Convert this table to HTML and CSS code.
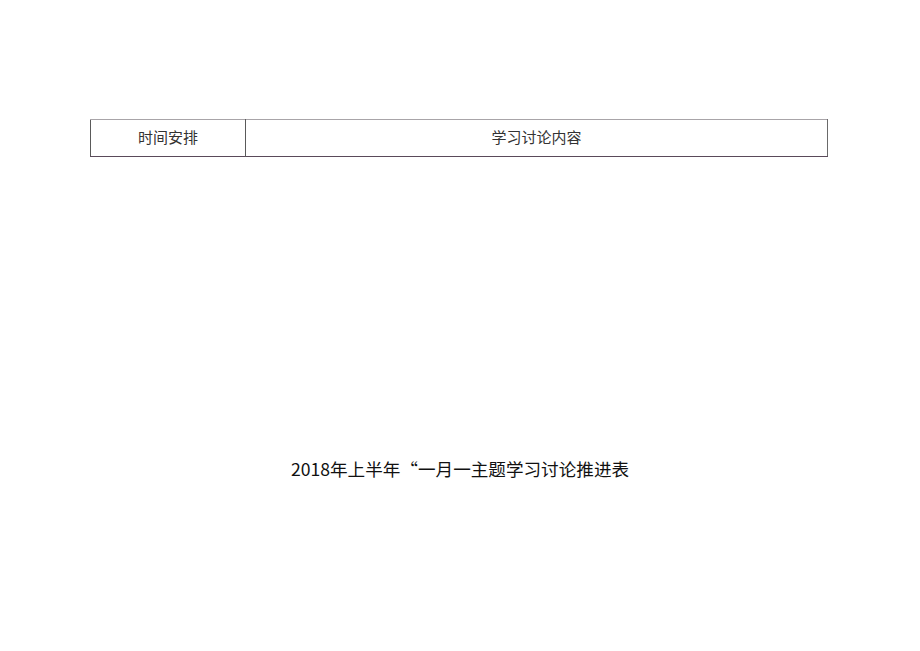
FILE: index.html
```html
<!DOCTYPE html>
<html lang="zh-CN">
<head>
<meta charset="UTF-8">
<meta name="viewport" content="width=device-width, initial-scale=1.0">
<title>2018年上半年“一月一主题学习讨论推进表</title>
<link rel="stylesheet" href="styles.css">
</head>
<body>
<div id="page">
    <table class="plan">
        <tr>
            <td class="time">时间安排</td>
            <td class="topic">学习讨论内容</td>
        </tr>
    </table>
    <h1 class="title">2018年上半年“一月一主题学习讨论推进表</h1>
</div>
</body>
</html>
```

FILE: styles.css
```css
body {
    margin: 0;
    background: #fff;
    color: #222;
    font-family: "Noto Sans CJK SC", "Liberation Sans", sans-serif;
}
#page {
    width: 920px;
    height: 651px;
    padding-top: 119px;
    box-sizing: border-box;
}
.plan {
    margin-left: 90px;
    width: 738px;
    height: 38px;
    border-collapse: collapse;
    border-top: 1px solid #a8a4a8;
    border-left: 1px solid #5a5a5a;
    border-right: 1px solid #6a6a6a;
    border-bottom: 1px solid #5a4a5a;
}
.plan td {
    padding: 0 0 3px;
    text-align: center;
    font-size: 15px;
    line-height: 33px;
    color: #333;
}
.time {
    width: 154px;
    border-right: 1px solid #5a5a5a;
}
.title {
    margin: 298px 0 0;
    text-align: center;
    font-size: 17.6px;
    font-weight: normal;
    line-height: 28px;
    color: #111;
}
```
